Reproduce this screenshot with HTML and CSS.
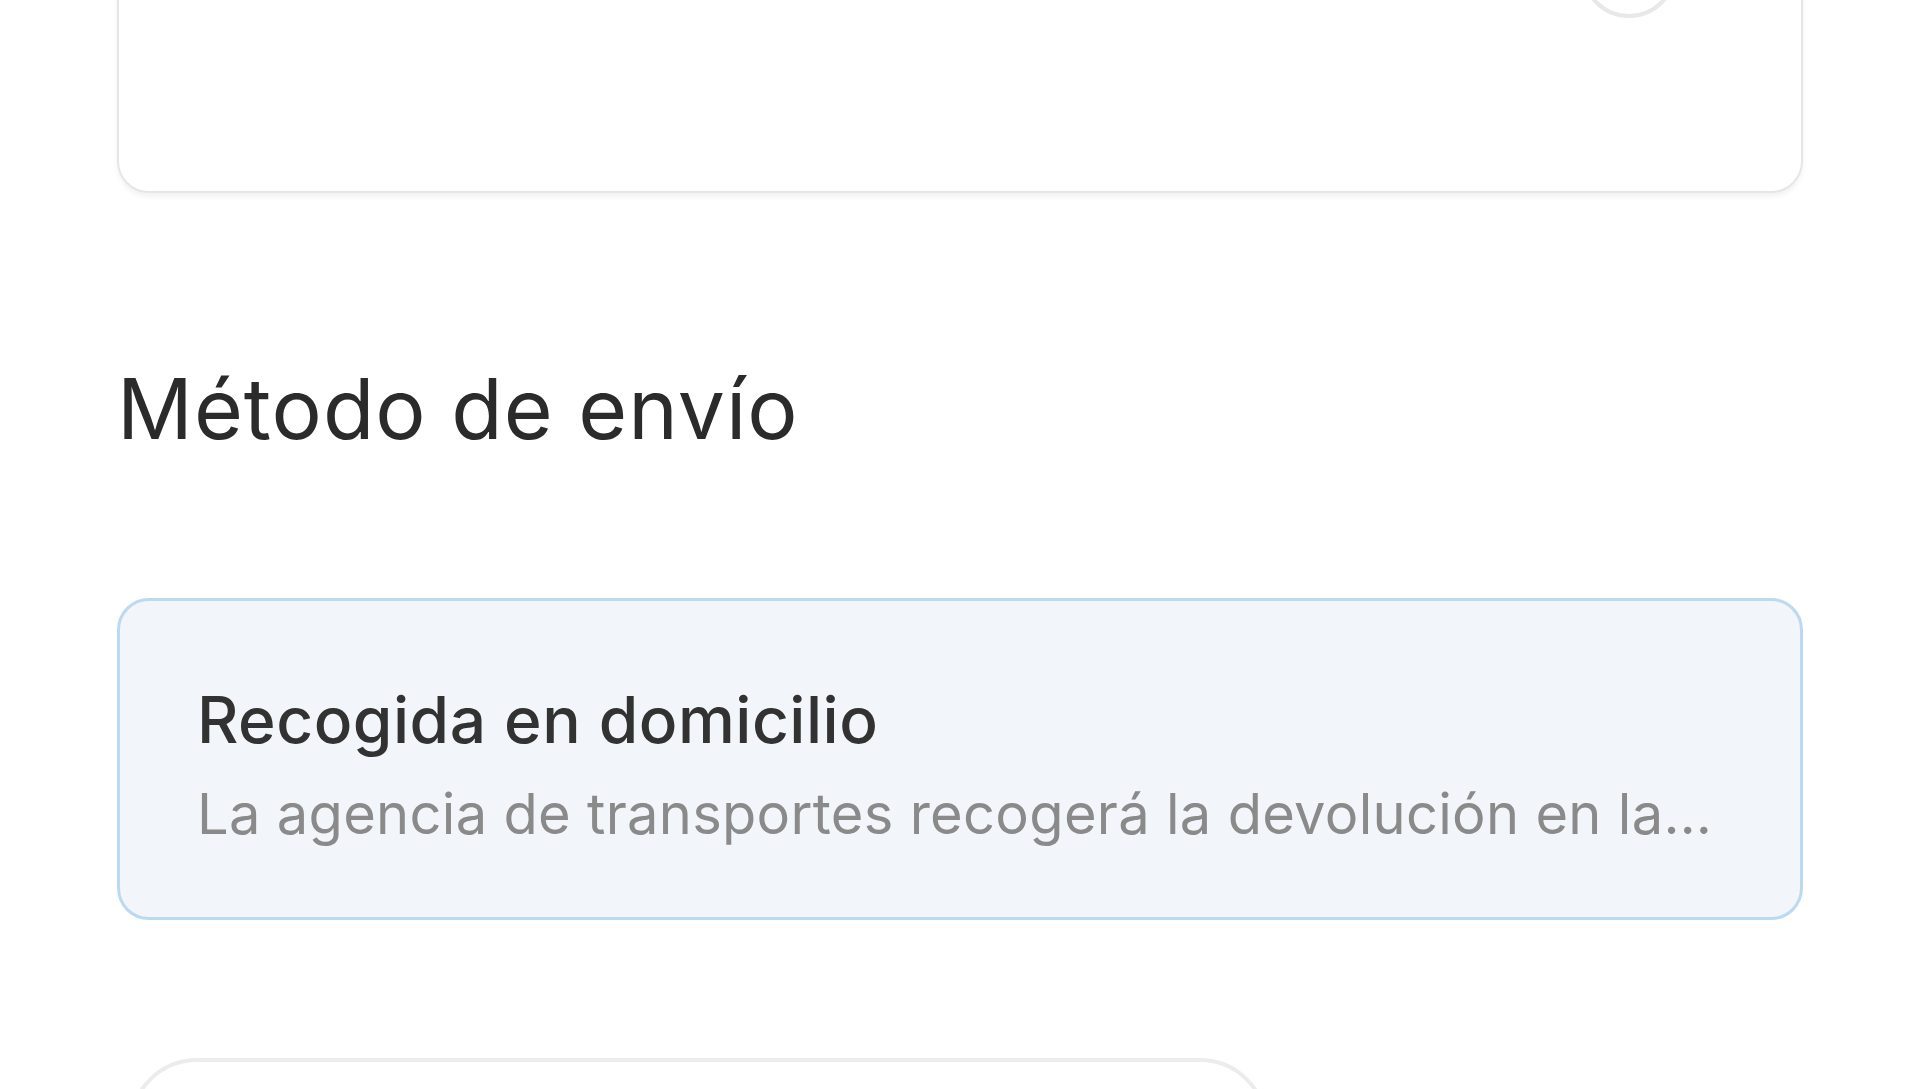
FILE: index.html
```html
<!DOCTYPE html>
<html lang="es">
<head>
<meta charset="utf-8">
<title>Método de envío</title>
<link rel="stylesheet" href="styles.css">
</head>
<body>
<main class="page">
  <section class="card card-address">
    <p class="address-line">Agencia Express, gratis</p>
    <span class="radio" aria-hidden="true"></span>
  </section>

  <h2 class="section-title">Método de envío</h2>

  <section class="card card-option is-selected">
    <p class="option-title">Recogida en domicilio</p>
    <p class="option-desc">La agencia de transportes recogerá la devolución en la…</p>
  </section>

  <div class="pill"></div>
</main>
</body>
</html>
```

FILE: styles.css
```css
html, body {
  margin: 0;
  padding: 0;
  background: #ffffff;
}

body {
  width: 1920px;
  height: 1089px;
  overflow: hidden;
  font-family: Inter, "Noto Sans", sans-serif;
}

.page {
  padding: 0 117px;
  display: flex;
  flex-direction: column;
}

p { margin: 0; }

.card {
  box-sizing: border-box;
  border-radius: 32px;
}

.card-address {
  height: 343px;
  margin-top: -150px;
  border: 2px solid #e6e6e6;
  box-shadow: 0 4px 5px rgba(0, 0, 0, 0.05);
  background: #ffffff;
  display: flex;
  justify-content: space-between;
  align-items: flex-start;
  padding: 0 124px 0 81px;
}

.address-line {
  margin-top: 73px;
  font-size: 56px;
  line-height: 80px;
  color: #b0b0b0;
}

.radio {
  margin-top: 70px;
  width: 96px;
  height: 96px;
  box-sizing: border-box;
  border-radius: 50%;
  border: 4px solid #e8e8e8;
}

.section-title {
  margin: 161px 0 0;
  font-size: 84px;
  line-height: 110px;
  font-weight: 400;
  color: #2b2b2b;
  letter-spacing: 1px;
}

.card-option {
  margin-top: 134px;
  height: 322px;
  padding: 75px 77px 0 77px;
  border: 3px solid #bcd9f2;
  background: #f2f6fa;
}

.option-title {
  font-size: 64px;
  line-height: 88px;
  font-weight: 500;
  color: #323232;
  letter-spacing: 0.5px;
}

.option-desc {
  margin-top: 10px;
  font-size: 56px;
  line-height: 80px;
  color: #8a8a8a;
  letter-spacing: 0.3px;
  white-space: nowrap;
  overflow: hidden;
}

.pill {
  margin: 138px 0 0 12px;
  width: 1139px;
  height: 136px;
  box-sizing: border-box;
  border: 4px solid #ececec;
  border-radius: 68px;
  background: #ffffff;
}
```
